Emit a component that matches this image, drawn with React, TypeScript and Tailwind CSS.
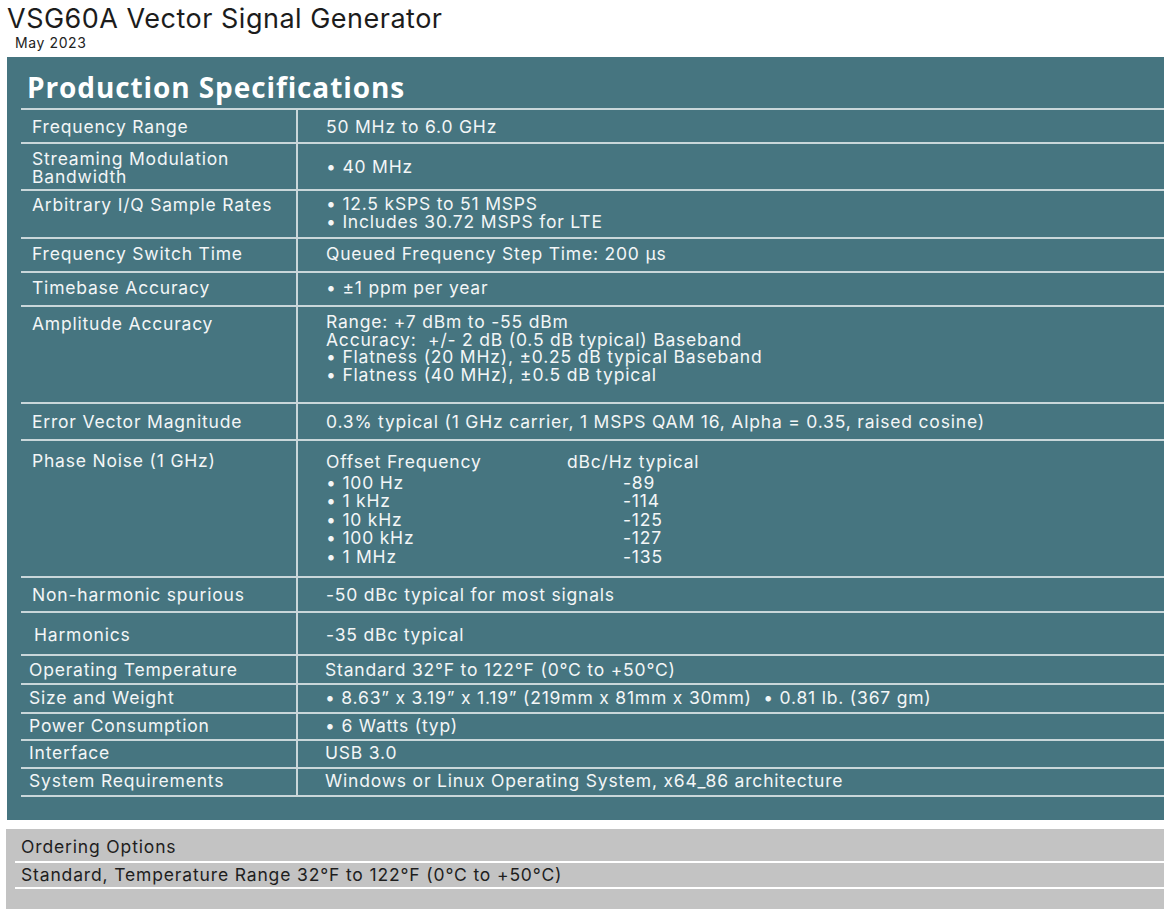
import React from 'react';

// Hoja de datos: filas con altura fija para que las líneas caigan igual que en el PDF
interface Fila {
  etiqueta: React.ReactNode;
  valor: React.ReactNode;
  alto: string;
  ptIzq: string;
  ptDer: string;
  izq?: string;
  der?: string;
}

const bullet = (t: string) => <div>• {t}</div>;

const ruidoFase = [
  ['100 Hz', '-89'],
  ['1 kHz', '-114'],
  ['10 kHz', '-125'],
  ['100 kHz', '-127'],
  ['1 MHz', '-135'],
];

const filas: Fila[] = [
  { etiqueta: 'Frequency Range', valor: '50 MHz to 6.0 GHz', alto: 'h-[34px]', ptIzq: 'pt-[8px]', ptDer: 'pt-[8px]' },
  {
    etiqueta: (
      <>
        <div>Streaming Modulation</div>
        <div>Bandwidth</div>
      </>
    ),
    valor: bullet('40 MHz'),
    alto: 'h-[47px]',
    ptIzq: 'pt-[6px]',
    ptDer: 'pt-[14px]',
  },
  {
    etiqueta: 'Arbitrary I/Q Sample Rates',
    valor: (
      <>
        {bullet('12.5 kSPS to 51 MSPS')}
        {bullet('Includes 30.72 MSPS for LTE')}
      </>
    ),
    alto: 'h-[48px]',
    ptIzq: 'pt-[5px]',
    ptDer: 'pt-[4px]',
  },
  { etiqueta: 'Frequency Switch Time', valor: 'Queued Frequency Step Time: 200 µs', alto: 'h-[34px]', ptIzq: 'pt-[6px]', ptDer: 'pt-[6px]' },
  { etiqueta: 'Timebase Accuracy', valor: bullet('±1 ppm per year'), alto: 'h-[34px]', ptIzq: 'pt-[6px]', ptDer: 'pt-[6px]' },
  {
    etiqueta: 'Amplitude Accuracy',
    valor: (
      <>
        <div>Range: +7 dBm to -55 dBm</div>
        <div className="whitespace-pre">Accuracy:  +/- 2 dB (0.5 dB typical) Baseband</div>
        {bullet('Flatness (20 MHz), ±0.25 dB typical Baseband')}
        {bullet('Flatness (40 MHz), ±0.5 dB typical')}
      </>
    ),
    alto: 'h-[97px]',
    ptIzq: 'pt-[8px]',
    ptDer: 'pt-[6px]',
  },
  {
    etiqueta: 'Error Vector Magnitude',
    valor: '0.3% typical (1 GHz carrier, 1 MSPS QAM 16, Alpha = 0.35, raised cosine)',
    alto: 'h-[37px]',
    ptIzq: 'pt-[9px]',
    ptDer: 'pt-[9px]',
  },
  {
    etiqueta: 'Phase Noise (1 GHz)',
    valor: (
      <div className="flex">
        <div className="w-[241px]">
          <div>Offset Frequency</div>
          <div className="mt-[3px] leading-[18.5px]">
            {ruidoFase.map(([f]) => (
              <div key={f}>• {f}</div>
            ))}
          </div>
        </div>
        <div>
          <div>dBc/Hz typical</div>
          <div className="mt-[3px] leading-[18.5px] pl-[56px]">
            {ruidoFase.map(([f, v]) => (
              <div key={f}>{v}</div>
            ))}
          </div>
        </div>
      </div>
    ),
    alto: 'h-[137px]',
    ptIzq: 'pt-[11px]',
    ptDer: 'pt-[12px]',
  },
  { etiqueta: 'Non-harmonic spurious', valor: '-50 dBc typical for most signals', alto: 'h-[35px]', ptIzq: 'pt-[8px]', ptDer: 'pt-[8px]' },
  { etiqueta: 'Harmonics', valor: '-35 dBc typical', alto: 'h-[43px]', ptIzq: 'pt-[13px]', ptDer: 'pt-[13px]', izq: 'pl-[13px]' },
  { etiqueta: 'Operating Temperature', valor: 'Standard 32°F to 122°F (0°C to +50°C)', alto: 'h-[29px]', ptIzq: 'pt-[5px]', ptDer: 'pt-[5px]', izq: 'pl-[8px]', der: 'pl-[27px]' },
  {
    etiqueta: 'Size and Weight',
    valor: <span className="whitespace-pre">• 8.63” x 3.19” x 1.19” (219mm x 81mm x 30mm)  • 0.81 lb. (367 gm)</span>,
    alto: 'h-[29px]',
    ptIzq: 'pt-[4px]',
    ptDer: 'pt-[4px]',
    izq: 'pl-[8px]',
    der: 'pl-[27px]',
  },
  { etiqueta: 'Power Consumption', valor: bullet('6 Watts (typ)'), alto: 'h-[27px]', ptIzq: 'pt-[3px]', ptDer: 'pt-[3px]', izq: 'pl-[8px]', der: 'pl-[27px]' },
  { etiqueta: 'Interface', valor: 'USB 3.0', alto: 'h-[28px]', ptIzq: 'pt-[3px]', ptDer: 'pt-[3px]', izq: 'pl-[8px]', der: 'pl-[27px]' },
  {
    etiqueta: 'System Requirements',
    valor: 'Windows or Linux Operating System, x64_86 architecture',
    alto: 'h-[28px]',
    ptIzq: 'pt-[3px]',
    ptDer: 'pt-[3px]',
    izq: 'pl-[8px]',
    der: 'pl-[27px]',
  },
];

export default function App() {
  return (
    <div className="min-h-[919px] bg-white overflow-hidden font-['Inter','Liberation_Sans',sans-serif]">
      {/* Encabezado */}
      <div className="pl-[7px] pt-[3px]">
        <h1 className="text-[27px] leading-[32px] text-[#1c1c1c] tracking-[0.5px]">VSG60A Vector Signal Generator</h1>
        <div className="pl-[8px] text-[14px] leading-[16px] tracking-[0.6px] text-[#222]">May 2023</div>
      </div>

      {/* Panel de especificaciones */}
      <div className="ml-[7px] mt-[6px] bg-[#467580] text-[#f3f6f7] pb-[23px]">
        <div className="h-[51px] flex items-end pb-[5px] pl-[20px]">
          <h2 className="font-['Open_Sans','Noto_Sans',sans-serif] font-bold text-[28px] leading-[32px] tracking-[0.9px] text-white">
            Production Specifications
          </h2>
        </div>
        <div className="ml-[14px] border-t-2 border-[#c9d7da] text-[17.5px] leading-[17.5px] tracking-[0.8px]">
          {filas.map((f, i) => (
            <div key={i} className={`flex border-b-2 border-[#c9d7da] ${f.alto}`}>
              <div className={`w-[277px] shrink-0 border-r-2 border-[#c9d7da] ${f.izq ?? 'pl-[11px]'} ${f.ptIzq}`}>{f.etiqueta}</div>
              <div className={`flex-1 ${f.der ?? 'pl-[28px]'} ${f.ptDer}`}>{f.valor}</div>
            </div>
          ))}
        </div>
      </div>

      {/* Opciones de pedido */}
      <div className="ml-[6px] mt-[9px] h-[80px] bg-[#c3c3c3] text-[#1e1e1e] text-[17.5px] leading-[20px] tracking-[0.85px] pl-[9px]">
        <div className="h-[34px] border-b-2 border-white pl-[6px] pt-[8px]">Ordering Options</div>
        <div className="h-[26px] border-b-2 border-white pl-[6px] pt-[2px]">Standard, Temperature Range 32°F to 122°F (0°C to +50°C)</div>
      </div>
    </div>
  );
}
